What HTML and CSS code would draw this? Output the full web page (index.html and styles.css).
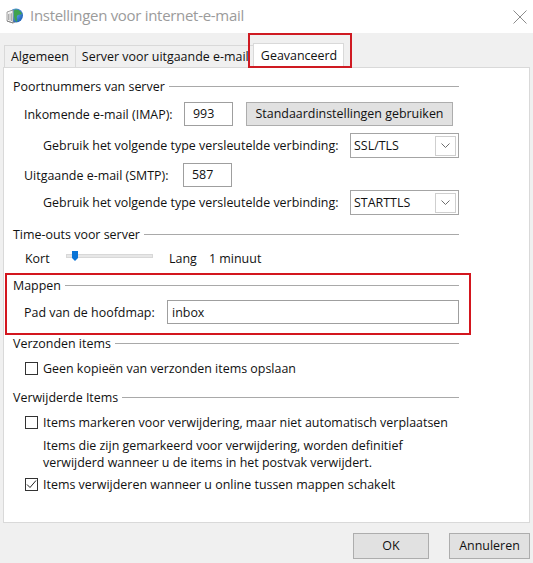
FILE: index.html
```html
<!DOCTYPE html>
<html lang="nl">
<head>
<meta charset="utf-8">
<title>Instellingen voor internet-e-mail</title>
<link rel="stylesheet" href="styles.css">
</head>
<body>
<div class="window">
  <div class="titlebar">
    <svg class="app-icon" width="18" height="19" viewBox="0 0 18 19">
      <defs>
        <radialGradient id="g" cx="0.4" cy="0.35" r="0.7">
          <stop offset="0" stop-color="#6fb3f0"/>
          <stop offset="1" stop-color="#1d5fb8"/>
        </radialGradient>
      </defs>
      <circle cx="11" cy="9.5" r="7" fill="url(#g)"/>
      <path d="M10 3.5 C13 3 16 5 17 8 C15 9 13 8 12 10 C11 12 13 14 12 16 C10 15 9 12 9 10 C9 7 8 5 10 3.5 Z" fill="#3fa34d"/>
      <path d="M2 6 L8 4 L8 17 L2 15 Z" fill="#f4f4f4" stroke="#8a8a8a" stroke-width="0.8"/>
      <path d="M3.5 8 V14 M5 7.6 V14.5 M6.5 7.2 V15" stroke="#9a9a9a" stroke-width="0.8"/>
      <path d="M2 15 L8 17 L10 16" stroke="#7a7a7a" stroke-width="0.8" fill="none"/>
    </svg>
    <span class="title">Instellingen voor internet-e-mail</span>
    <svg class="close" width="14" height="14" viewBox="0 0 14 14">
      <path d="M0.5 0.5 L13.5 13.5 M13.5 0.5 L0.5 13.5" stroke="#8c8c8c" stroke-width="1"/>
    </svg>
  </div>

  <div class="tabs">
    <div class="tab">Algemeen</div>
    <div class="tab tab-wide">Server voor uitgaande e-mail</div>
    <div class="tab tab-active">Geavanceerd</div>
  </div>

  <div class="panel">
    <div class="content">
      <div class="group-head first"><span>Poortnummers van server</span><i class="rule"></i></div>

      <div class="row row-imap">
        <span class="lbl-in">Inkomende e-mail (IMAP):</span>
        <div class="input port">993</div>
        <div class="btn btn-default">Standaardinstellingen gebruiken</div>
      </div>

      <div class="row row-sel r-g1">
        <span class="lbl-enc">Gebruik het volgende type versleutelde verbinding:</span>
        <div class="select">
          <span>SSL/TLS</span>
          <span class="drop"><svg width="9" height="5" viewBox="0 0 9 5"><path d="M0.5 0.5 L4.5 4.5 L8.5 0.5" stroke="#6d6d6d" fill="none" stroke-width="1"/></svg></span>
        </div>
      </div>

      <div class="row r-smtp">
        <span class="lbl-in lbl-smtp">Uitgaande e-mail (SMTP):</span>
        <div class="input port">587</div>
      </div>

      <div class="row row-sel r-g2">
        <span class="lbl-enc">Gebruik het volgende type versleutelde verbinding:</span>
        <div class="select">
          <span>STARTTLS</span>
          <span class="drop"><svg width="9" height="5" viewBox="0 0 9 5"><path d="M0.5 0.5 L4.5 4.5 L8.5 0.5" stroke="#6d6d6d" fill="none" stroke-width="1"/></svg></span>
        </div>
      </div>

      <div class="group-head"><span>Time-outs voor server</span><i class="rule"></i></div>

      <div class="row r-slider">
        <span class="kort">Kort</span>
        <div class="slider">
          <div class="track"></div>
          <svg class="thumb" width="6" height="10" viewBox="0 0 6 10"><path d="M0 0 H6 V7 L3 10 L0 7 Z" fill="#0a74d6"/></svg>
        </div>
        <span class="lang">Lang</span>
        <span class="minuut">1 minuut</span>
      </div>

      <div class="highlight">
        <div class="group-head g-mappen"><span>Mappen</span><i class="rule"></i></div>
        <div class="row r-pad">
          <span class="lbl-pad">Pad van de hoofdmap:</span>
          <div class="input path">inbox</div>
        </div>
      </div>

      <div class="group-head"><span>Verzonden items</span><i class="rule"></i></div>
      <div class="row check r-c1">
        <span class="box"></span>
        <span>Geen kopieën van verzonden items opslaan</span>
      </div>

      <div class="group-head"><span>Verwijderde Items</span><i class="rule"></i></div>
      <div class="row check r-c1">
        <span class="box"></span>
        <span>Items markeren voor verwijdering, maar niet automatisch verplaatsen</span>
      </div>
      <p class="note">Items die zijn gemarkeerd voor verwijdering, worden definitief<br>verwijderd wanneer u de items in het postvak verwijdert.</p>
      <div class="row check r-c3">
        <span class="box"><svg width="11" height="11" viewBox="0 0 11 11"><path d="M1 5.5 L4 8.5 L10 1.5" stroke="#222" fill="none" stroke-width="1"/></svg></span>
        <span>Items verwijderen wanneer u online tussen mappen schakelt</span>
      </div>
    </div>
  </div>

  <div class="footer">
    <div class="btn btn-ok">OK</div>
    <div class="btn btn-cancel">Annuleren</div>
  </div>
</div>
</body>
</html>
```
FILE: styles.css
```css
* { box-sizing: border-box; }

html, body {
  margin: 0;
  padding: 0;
}

body {
  width: 533px;
  height: 563px;
  overflow: hidden;
  background: #f0f0f0;
  font-family: "Open Sans", "Noto Sans", sans-serif;
  font-size: 12.45px;
  color: #111;
}

.window {
  width: 533px;
  height: 563px;
}

/* Title bar */
.titlebar {
  height: 33px;
  background: #fff;
  display: flex;
  align-items: flex-start;
}

.app-icon {
  margin: 6px 0 0 5px;
  flex: none;
}

.title {
  margin: 5px 0 0 7px;
  font-size: 15px;
  letter-spacing: -0.3px;
  color: #9b9b9b;
  line-height: 20px;
}

.close {
  margin: 10px 0 0 auto;
  margin-right: 6px;
}

/* Tabs */
.tabs {
  height: 35px;
  display: flex;
  align-items: flex-end;
  padding-left: 4px;
  position: relative;
  z-index: 1;
}

.tab {
  height: 22px;
  line-height: 21px;
  padding: 0 6px;
  border: 1px solid #d9d9d9;
  border-bottom: none;
  margin-right: -1px;
  margin-bottom: 1px;
  background: #f0f0f0;
  white-space: nowrap;
}

.tab-wide {
  width: 182px;
  overflow: hidden;
}

.tab-active {
  position: relative;
  height: 25px;
  line-height: 24px;
  margin-left: -3px;
  margin-bottom: 0;
  padding: 0 6px 0 7px;
  background: #fff;
}

.tab-active::after {
  content: "";
  position: absolute;
  left: -6px;
  right: -9px;
  top: -11px;
  bottom: 0;
  border: 2px solid #cf1a22;
  pointer-events: none;
}

/* Panel */
.panel {
  margin: -1px 3px 0 3px;
  height: 456px;
  border: 1px solid #d9d9d9;
  background: #fff;
  padding: 8px 0 0 9px;
}

.content {
  width: 446px;
}

.group-head {
  display: flex;
  align-items: center;
  height: 20px;
  margin-top: 9px;
  white-space: nowrap;
}

.group-head.first {
  margin-top: 0;
}

.rule {
  flex: 1;
  height: 1px;
  background: #a9a9a9;
  margin-left: 4px;
}

.row {
  display: flex;
  align-items: center;
  height: 24px;
  white-space: nowrap;
}

.row-imap { margin-top: 6px; }
.r-g1 { margin-top: 7px; }
.r-smtp { margin-top: 5px; }
.r-g2 { margin-top: 3px; }
.r-slider { margin-top: 4px; height: 20px; }
.r-pad { margin-top: 5px; }
.r-c1 { margin-top: 5px; height: 20px; }
.r-c3 { margin-top: 3px; height: 20px; }

.row-sel { height: 25px; }

.lbl-in {
  margin-left: 11px;
  width: 160px;
}

.lbl-smtp { width: 159px; }

.input {
  height: 24px;
  border: 1px solid #9f9f9f;
  background: #fff;
  line-height: 22px;
}

.port {
  width: 49px;
  padding-left: 8px;
}

.btn {
  height: 24px;
  border: 1px solid #adadad;
  background: #e1e1e1;
  text-align: center;
  line-height: 22px;
}

.btn-default {
  margin-left: 13px;
  width: 207px;
}

.lbl-enc {
  margin-left: 30px;
}

.select {
  margin-left: auto;
  width: 109px;
  height: 25px;
  border: 1px solid #a4a4a4;
  display: flex;
  align-items: center;
  padding: 0 2px 0 3px;
}

.select span:first-child {
  flex: 1;
}

.drop {
  width: 21px;
  height: 20px;
  border: 1px solid #cfcfcf;
  display: flex;
  align-items: center;
  justify-content: center;
}

/* Slider */
.kort {
  margin-left: 12px;
  width: 41px;
}

.slider {
  position: relative;
  width: 87px;
  height: 20px;
}

.track {
  position: absolute;
  left: 0;
  right: 0;
  top: 6px;
  height: 4px;
  background: #e7e7e7;
  border: 1px solid #d8d8d8;
}

.thumb {
  position: absolute;
  left: 6px;
  top: 3px;
}

.lang {
  margin-left: 16px;
  width: 40px;
}

/* Mappen highlight */
.highlight {
  position: relative;
  margin-top: 7px;
}

.highlight::after {
  content: "";
  position: absolute;
  left: -8px;
  right: -12px;
  top: -2px;
  bottom: -11px;
  border: 2px solid #d3161e;
  pointer-events: none;
}

.g-mappen { margin-top: 0; }

.lbl-pad {
  margin-left: 11px;
  width: 143px;
}

.path {
  flex: 1;
  padding-left: 4px;
  line-height: 23px;
}

/* Checkboxes */
.check .box {
  margin-left: 12px;
  margin-right: 5px;
  width: 13px;
  height: 13px;
  border: 1px solid #333;
  background: #fff;
  display: flex;
  align-items: center;
  justify-content: center;
  flex: none;
}

.note {
  margin: 5px 0 0 30px;
  line-height: 17px;
}

/* Footer */
.footer {
  display: flex;
  justify-content: flex-end;
  padding: 10px 3px 0 0;
}

.footer .btn {
  height: 26px;
  line-height: 24px;
}

.btn-ok {
  width: 76px;
  margin-right: 20px;
}

.btn-cancel {
  width: 81px;
}
```
